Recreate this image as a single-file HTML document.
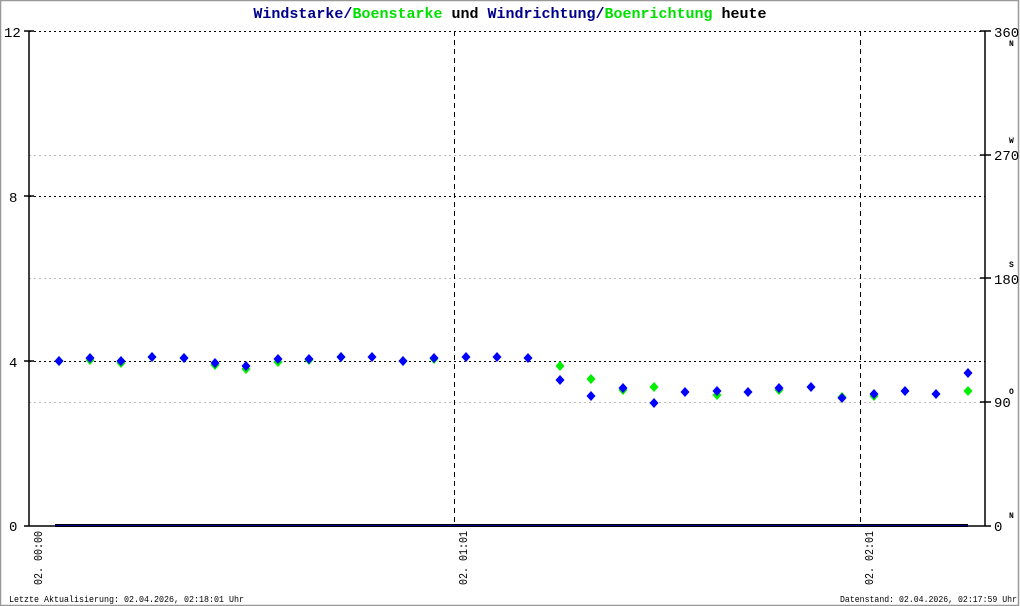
<!DOCTYPE html>
<html><head><meta charset="utf-8"><style>
html,body{margin:0;padding:0;background:#fff;}
svg{display:block;}
text{font-family:"Liberation Mono","DejaVu Sans Mono",monospace;}
</style></head><body>
<svg width="1020" height="606" viewBox="0 0 1020 606" xmlns="http://www.w3.org/2000/svg">
<rect x="0.5" y="0.5" width="1018" height="605" fill="#fff" stroke="#999" stroke-width="1.5"/>
<text x="510" y="18" text-anchor="middle" font-size="15" font-weight="bold"><tspan fill="#00008b">Windstarke/</tspan><tspan fill="#00e000">Boenstarke</tspan><tspan fill="#000"> und </tspan><tspan fill="#00008b">Windrichtung/</tspan><tspan fill="#00e000">Boenrichtung</tspan><tspan fill="#000"> heute</tspan></text>
<g stroke="#000" stroke-dasharray="2,3" stroke-width="1">
<line x1="29" y1="31.5" x2="985" y2="31.5"/>
<line x1="29" y1="196.5" x2="985" y2="196.5"/>
<line x1="29" y1="361.5" x2="985" y2="361.5"/>
</g>
<g stroke="#bbb" stroke-dasharray="2,3" stroke-width="1">
<line x1="29" y1="155.5" x2="985" y2="155.5"/>
<line x1="29" y1="278.5" x2="985" y2="278.5"/>
<line x1="29" y1="402.5" x2="985" y2="402.5"/>
</g>
<g stroke="#000" stroke-dasharray="5,4" stroke-width="1">
<line x1="454.5" y1="31" x2="454.5" y2="526"/>
<line x1="860.5" y1="31" x2="860.5" y2="526"/>
</g>
<g stroke="#000" stroke-width="1.5">
<line x1="29" y1="31" x2="29" y2="526"/>
<line x1="985" y1="31" x2="985" y2="526"/>
<line x1="24" y1="526" x2="55" y2="526"/>
<line x1="968" y1="526" x2="991" y2="526"/>
<line x1="24" y1="31" x2="34" y2="31"/><line x1="24" y1="196" x2="34" y2="196"/><line x1="24" y1="361" x2="34" y2="361"/>
<line x1="980" y1="31" x2="991" y2="31"/><line x1="980" y1="155" x2="991" y2="155"/><line x1="980" y1="278" x2="991" y2="278"/><line x1="980" y1="402" x2="991" y2="402"/>
</g>
<rect x="55" y="524" width="913" height="3" fill="#000"/>
<line x1="55" y1="525.5" x2="968" y2="525.5" stroke="#00008b" stroke-width="1"/>
<g font-size="14" fill="#000">
<text x="4" y="37">12</text><text x="9" y="202">8</text><text x="9" y="367">4</text><text x="9" y="531">0</text>
<text x="994" y="37">360</text><text x="994" y="160">270</text><text x="994" y="284">180</text><text x="994" y="407">90</text><text x="994" y="531">0</text>
</g>
<g font-size="8" font-weight="bold" fill="#000">
<text x="1009" y="46">N</text><text x="1009" y="143">W</text><text x="1009" y="267">S</text><text x="1009" y="394">O</text><text x="1009" y="518">N</text>
</g>
<g font-size="12" fill="#000">
<text transform="translate(42,585) rotate(-90)" textLength="54" lengthAdjust="spacingAndGlyphs">02. 00:00</text>
<text transform="translate(467,585) rotate(-90)" textLength="54" lengthAdjust="spacingAndGlyphs">02. 01:01</text>
<text transform="translate(873,585) rotate(-90)" textLength="54" lengthAdjust="spacingAndGlyphs">02. 02:01</text>
</g>
<g font-size="9.5" fill="#000">
<text x="9" y="602" textLength="235" lengthAdjust="spacingAndGlyphs">Letzte Aktualisierung: 02.04.2026, 02:18:01 Uhr</text>
<text x="840" y="602" textLength="177" lengthAdjust="spacingAndGlyphs">Datenstand: 02.04.2026, 02:17:59 Uhr</text>
</g>
<g fill="#00ee00" id="g"></g>
<g fill="#0000ff" id="b"></g>
<script>
var xs=[59,90,121,152,184,215,246,278,309,341,372,403,434,466,497,528,560,591,623,654,685,717,748,779,811,842,874,905,936,968];
var gy=[361,360,363,357,358,365,369,362,360,357,null,361,359,null,null,null,366,379,390,387,null,395,null,390,null,397,396,null,null,391];
var by=[361,358,361,357,358,363,366,359,359,357,357,361,358,357,357,358,380,396,388,403,392,391,392,388,387,398,394,391,394,373];
function d(x,y,id){var p=document.createElementNS("http://www.w3.org/2000/svg","polygon");p.setAttribute("points",(x)+","+(y-5)+" "+(x+4.5)+","+y+" "+x+","+(y+5)+" "+(x-4.5)+","+y);document.getElementById(id).appendChild(p);}
xs.forEach(function(x,i){if(gy[i]!==null)d(x,gy[i],"g");});
xs.forEach(function(x,i){d(x,by[i],"b");});
</script>
</svg>
</body></html>
